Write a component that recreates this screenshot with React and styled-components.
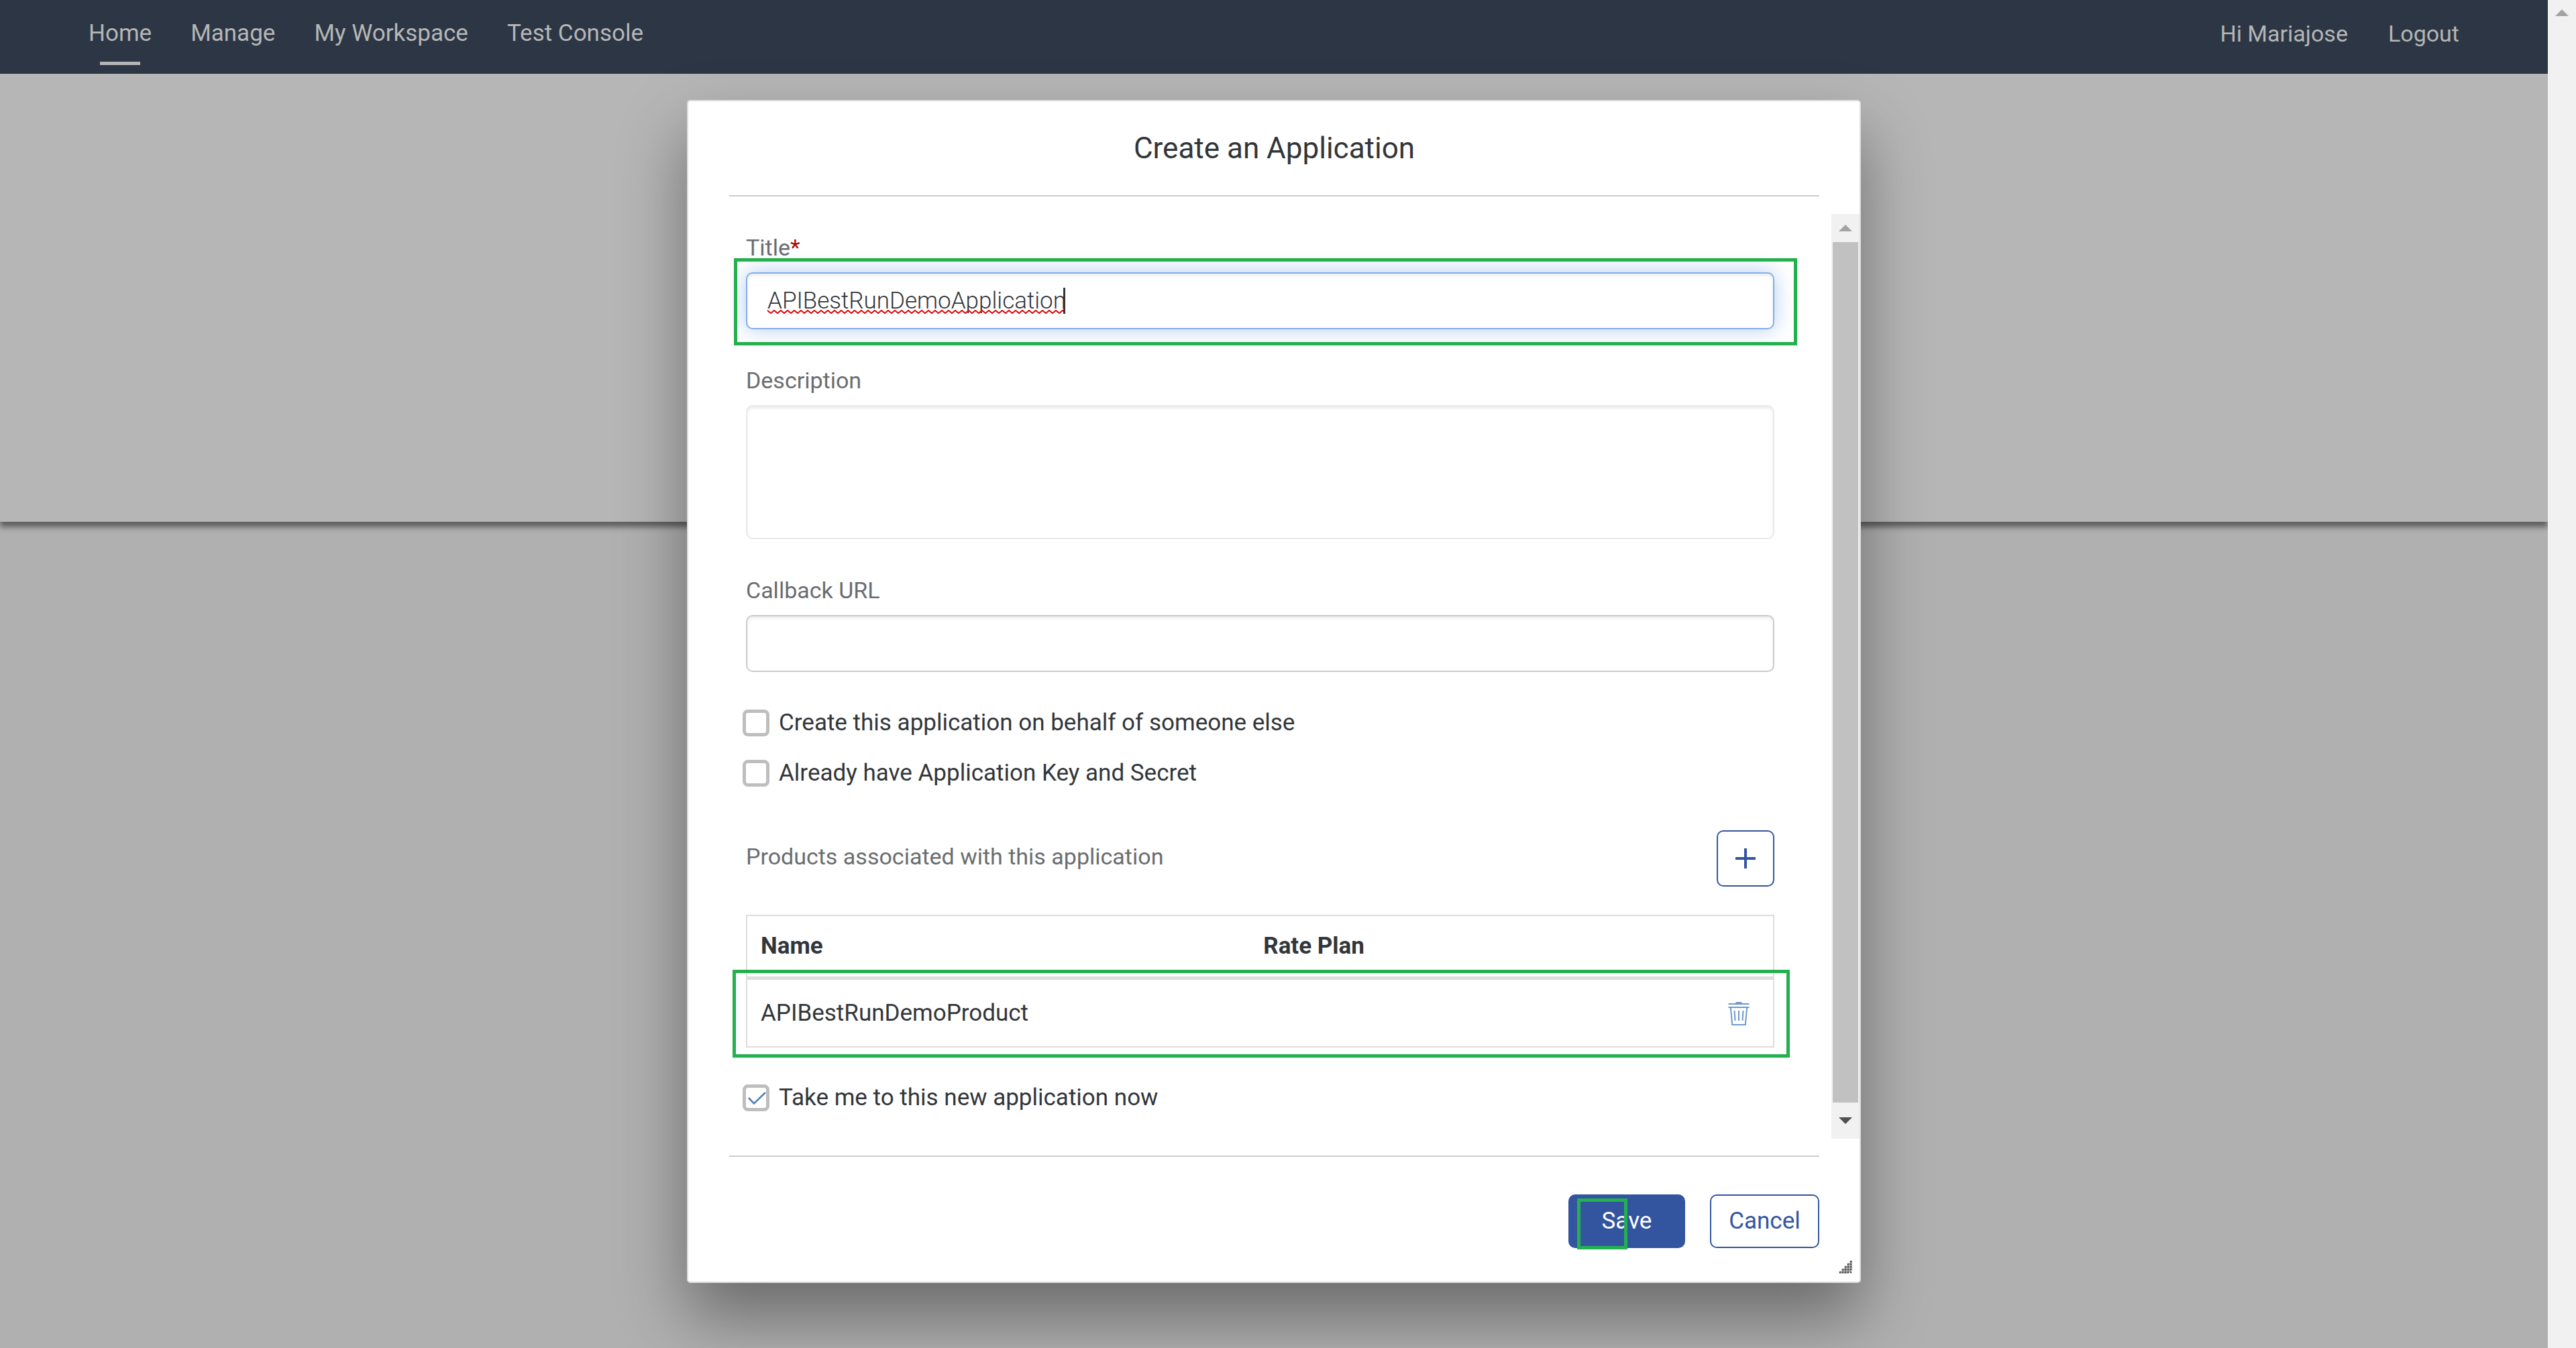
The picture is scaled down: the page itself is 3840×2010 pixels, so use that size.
import React, { useState } from "react";
import styled, { createGlobalStyle, css } from "styled-components";

const color = {
  ink: "#32363a",
  label: "#6a6d70",
  brand: "#3355a0",
  rule: "#cccccc",
  grid: "#dddddd",
  mark: "#23b14d",
  track: "#f1f1f1",
  dimmed: "#b6b6b6",
};

const GlobalStyle = createGlobalStyle`
  *, *::before, *::after { box-sizing: border-box; }
  body {
    margin: 0;
    color: ${color.ink};
    font-family: Roboto, "Noto Sans", sans-serif;
    font-size: 35px;
    line-height: 44px;
  }
  button, input, textarea { font: inherit; color: inherit; }
`;

const Window = styled.div`
  display: flex;
  min-height: 100vh;
`;

const Page = styled.div`
  position: relative;
  flex: 1;
  min-width: 0;
  display: flex;
  flex-direction: column;
  overflow: hidden;
  background: #b0b0b0;
`;

const NavBar = styled.header`
  display: flex;
  justify-content: space-between;
  padding: 28px 132px 38px;
  background: #2c3645;
`;

const NavGroup = styled.nav`
  display: flex;
  gap: ${(p) => (p.$account ? 60 : 58)}px;
  font-size: ${(p) => (p.$account ? 34 : 35)}px;
`;

const NavLink = styled.a`
  position: relative;
  color: ${color.dimmed};
  text-decoration: none;
  ${(p) =>
    p.$active &&
    css`
      &::after {
        content: "";
        position: absolute;
        top: 64px;
        left: calc(50% - 30px);
        width: 60px;
        height: 5px;
        background: ${color.dimmed};
      }
    `}
`;

const Hero = styled.section`
  height: 668px;
  background: ${color.dimmed};
  box-shadow: 0 8px 8px rgba(0, 0, 0, 0.46);
`;

const Overlay = styled.div`
  position: absolute;
  inset: 0;
  display: flex;
  justify-content: center;
  align-items: flex-start;
  padding-top: 149px;
`;

const Dialog = styled.section`
  position: relative;
  width: min(1750px, 92%);
  background: #ffffff;
  border: 2px solid ${color.grid};
  border-radius: 5px;
  box-shadow: 0 50px 100px rgba(0, 0, 0, 0.4);
`;

const DialogHeader = styled.header`
  margin: 0 60px 26px 61px;
  padding: 44px 0;
  border-bottom: 2px solid ${color.rule};
`;

const DialogTitle = styled.h2`
  margin: 0;
  font-size: 44px;
  font-weight: 400;
  line-height: 52px;
  text-align: center;
`;

const DialogBody = styled.div`
  display: flex;
  margin-bottom: 25px;
`;

const Form = styled.form`
  flex: 1;
  min-width: 0;
  padding: 28px 85px 8px 86px;
`;

const DialogFooter = styled.footer`
  display: flex;
  justify-content: flex-end;
  gap: 37px;
  margin: 0 60px 0 61px;
  padding: 56px 0 50px;
  border-top: 2px solid ${color.rule};
`;

const ScrollTrack = styled.div`
  display: flex;
  flex-direction: column;
  flex: none;
  width: 42px;
  background: ${color.track};
`;

const ScrollArrow = styled.div`
  display: flex;
  justify-content: center;
  align-items: center;
  height: ${(p) => p.$height}px;
`;

const ScrollThumb = styled.div`
  flex: 1;
  margin: 0 2px;
  background: #c1c1c1;
`;

const Field = styled.div`
  display: flex;
  flex-direction: column;
  gap: 15px;
  margin-bottom: 54px;
`;

const Label = styled.label`
  color: ${color.label};
  font-size: 34px;
`;

const Required = styled.span`
  color: #aa0808;
`;

const Marked = styled.div`
  position: relative;
  display: flex;
`;

const Mark = styled.span`
  position: absolute;
  inset: ${(p) => p.$inset};
  border: 5px solid ${color.mark};
  pointer-events: none;
`;

const control = css`
  display: block;
  width: 100%;
  padding: 0 30px;
  background: #ffffff;
  border-radius: 10px;
  outline: none;
  box-shadow: inset 0 3px 4px rgba(0, 0, 0, 0.08);
`;

const TextInput = styled.input`
  ${control}
  height: 85px;
  border: 2px solid ${color.rule};
  font-weight: 300;
  ${(p) =>
    p.$focused &&
    css`
      border-color: #83aee8;
      caret-color: transparent;
      box-shadow: inset 0 3px 4px rgba(0, 0, 0, 0.08), 0 0 30px rgba(102, 155, 230, 0.5);
    `}
`;

const TextArea = styled.textarea`
  ${control}
  height: 200px;
  border: 2px solid #e9e9e9;
  resize: none;
`;

const SpellCheck = styled.span`
  position: absolute;
  top: 23px;
  left: 32px;
  display: flex;
  align-items: flex-end;
  width: 444px;
  height: 39px;
  border-right: 3px solid ${color.ink};
  pointer-events: none;
`;

const CheckRow = styled.label`
  display: flex;
  align-items: center;
  gap: 14px;
  margin: 0 0 31px -5px;
`;

const CheckFrame = styled.span`
  display: grid;
  width: 40px;
  height: 40px;
  & > * { grid-area: 1 / 1; }
`;

const CheckBox = styled.input`
  appearance: none;
  width: 40px;
  height: 40px;
  margin: 0;
  border: 5px solid #bebebe;
  border-radius: 8px;
  background: #ffffff;
  & + svg { visibility: hidden; }
  &:checked + svg { visibility: visible; }
`;

const ProductsBar = styled.div`
  display: flex;
  justify-content: space-between;
  align-items: flex-start;
  margin: 63px 0 42px;
`;

const ProductsLabel = styled.span`
  color: ${color.label};
  font-size: 34px;
  line-height: 78px;
`;

const IconButton = styled.button`
  display: flex;
  justify-content: center;
  align-items: center;
  width: 86px;
  height: 84px;
  padding: 0;
  color: ${color.brand};
  background: #ffffff;
  border: 2px solid ${color.brand};
  border-radius: 10px;
`;

const BareButton = styled.button`
  display: flex;
  margin: 0 auto;
  padding: 0;
  color: #6f98cf;
  background: none;
  border: 0;
`;

const ProductsTable = styled.table`
  width: 100%;
  table-layout: fixed;
  border: 2px solid ${color.grid};
  border-spacing: 0;
  text-align: left;
`;

const HeadCell = styled.th`
  width: ${(p) => p.$width || "auto"};
  height: 95px;
  padding: 0 20px;
  border-bottom: 5px solid ${color.grid};
  font-weight: 700;
`;

const Cell = styled.td`
  height: 99px;
  padding: 0 20px;
`;

const TableBlock = styled(Marked)`
  margin-bottom: 53px;
`;

const Button = styled.button`
  position: relative;
  width: ${(p) => (p.$primary ? 174 : 163)}px;
  height: 80px;
  padding: 0;
  border: 2px solid ${color.brand};
  border-radius: 10px;
  color: ${(p) => (p.$primary ? "#ffffff" : color.brand)};
  background: ${(p) => (p.$primary ? color.brand : "#ffffff")};
`;

const SaveMark = styled(Mark)`
  width: 75px;
  height: 76px;
`;

const Grip = styled.svg`
  position: absolute;
  right: 11px;
  bottom: 12px;
`;

const Arrow = ({ down }) => (
  <svg width="20" height="10" viewBox="0 0 20 10" aria-hidden="true">
    <path d={down ? "M0 0h20L10 10z" : "M0 10h20L10 0z"} fill={down ? "#505050" : "#a3a3a3"} />
  </svg>
);

const Squiggle = () => (
  <svg width="100%" height="6" aria-hidden="true">
    <defs>
      <pattern id="wave" width="10" height="6" patternUnits="userSpaceOnUse">
        <path d="M-1 0L5 5L11 0" fill="none" stroke="#e00b0b" strokeWidth="2" />
      </pattern>
    </defs>
    <rect width="100%" height="6" fill="url(#wave)" />
  </svg>
);

const PlusIcon = () => (
  <svg width="32" height="32" viewBox="0 0 32 32" aria-hidden="true">
    <path d="M16 1v30M1 16h30" stroke="currentColor" strokeWidth="4" />
  </svg>
);

const TrashIcon = () => (
  <svg width="32" height="36" viewBox="0 0 32 36" fill="none" stroke="currentColor" strokeWidth="2" aria-hidden="true">
    <path d="M0.5 4h31M0.5 9h31M3.8 9l2.4 26h19.6L28.2 9M9.5 14l1 15M16 14v15M22.5 14l-1 15" />
    <path d="M10.5 3.5C11.5 1 13 1 14 1h4c1 0 2.5 0 3.5 2.5z" fill="currentColor" stroke="none" />
  </svg>
);

const CheckIcon = () => (
  <svg width="40" height="40" viewBox="0 0 40 40" aria-hidden="true">
    <path d="M9 20l8 8.500L34 12" fill="none" stroke="#5580b4" strokeWidth="2.6" />
  </svg>
);

const gripDots = [];
for (let row = 0; row < 5; row += 1) {
  for (let col = 4 - row; col < 5; col += 1) gripDots.push([col * 4 + 2, row * 4 + 2]);
}

const ResizeGrip = () => (
  <Grip width="20" height="20" viewBox="0 0 20 20" aria-hidden="true">
    <path d="M0 20L20 0v14l-6 6z" fill="#b5b5b5" />
    {gripDots.map(([x, y]) => (
      <circle key={`${x}-${y}`} cx={x} cy={y} r="1.5" fill="#555555" />
    ))}
  </Grip>
);

const Option = ({ checked, children }) => (
  <CheckRow>
    <CheckFrame>
      <CheckBox type="checkbox" defaultChecked={checked} />
      <CheckIcon />
    </CheckFrame>
    {children}
  </CheckRow>
);

export default function App() {
  const [title, setTitle] = useState("APIBestRunDemoApplication");
  return (
    <Window>
      <GlobalStyle />
      <Page>
        <NavBar>
          <NavGroup>
            <NavLink href="#home" $active>Home</NavLink>
            <NavLink href="#manage">Manage</NavLink>
            <NavLink href="#workspace">My Workspace</NavLink>
            <NavLink href="#console">Test Console</NavLink>
          </NavGroup>
          <NavGroup $account>
            <NavLink href="#profile">Hi Mariajose</NavLink>
            <NavLink href="#logout">Logout</NavLink>
          </NavGroup>
        </NavBar>
        <Hero />
        <Overlay>
          <Dialog role="dialog" aria-labelledby="dialog-title">
            <DialogHeader>
              <DialogTitle id="dialog-title">Create an Application</DialogTitle>
            </DialogHeader>
            <DialogBody>
              <Form id="application">
                <Field>
                  <Label htmlFor="title">Title<Required>*</Required></Label>
                  <Marked>
                    <TextInput id="title" $focused value={title} onChange={(e) => setTitle(e.target.value)} />
                    <SpellCheck><Squiggle /></SpellCheck>
                    <Mark $inset="-21px -34px -24px -18px" />
                  </Marked>
                </Field>
                <Field>
                  <Label htmlFor="description">Description</Label>
                  <TextArea id="description" />
                </Field>
                <Field>
                  <Label htmlFor="callback">Callback URL</Label>
                  <TextInput id="callback" />
                </Field>
                <Option>Create this application on behalf of someone else</Option>
                <Option>Already have Application Key and Secret</Option>
                <ProductsBar>
                  <ProductsLabel>Products associated with this application</ProductsLabel>
                  <IconButton type="button" aria-label="Add product"><PlusIcon /></IconButton>
                </ProductsBar>
                <TableBlock>
                  <ProductsTable>
                    <thead>
                      <tr>
                        <HeadCell $width="49%">Name</HeadCell>
                        <HeadCell>Rate Plan</HeadCell>
                        <HeadCell $width="102px" aria-label="Actions" />
                      </tr>
                    </thead>
                    <tbody>
                      <tr>
                        <Cell>APIBestRunDemoProduct</Cell>
                        <Cell />
                        <Cell>
                          <BareButton type="button" aria-label="Delete product"><TrashIcon /></BareButton>
                        </Cell>
                      </tr>
                    </tbody>
                  </ProductsTable>
                  <Mark $inset="82px -23px -15px -20px" />
                </TableBlock>
                <Option checked>Take me to this new application now</Option>
              </Form>
              <ScrollTrack>
                <ScrollArrow $height={42}><Arrow /></ScrollArrow>
                <ScrollThumb />
                <ScrollArrow $height={54}><Arrow down /></ScrollArrow>
              </ScrollTrack>
            </DialogBody>
            <DialogFooter>
              <Button type="submit" form="application" $primary>
                Save
                <SaveMark $inset="4px auto auto 11px" />
              </Button>
              <Button type="button">Cancel</Button>
            </DialogFooter>
            <ResizeGrip />
          </Dialog>
        </Overlay>
      </Page>
      <ScrollTrack>
        <ScrollArrow $height={38}><Arrow /></ScrollArrow>
      </ScrollTrack>
    </Window>
  );
}
